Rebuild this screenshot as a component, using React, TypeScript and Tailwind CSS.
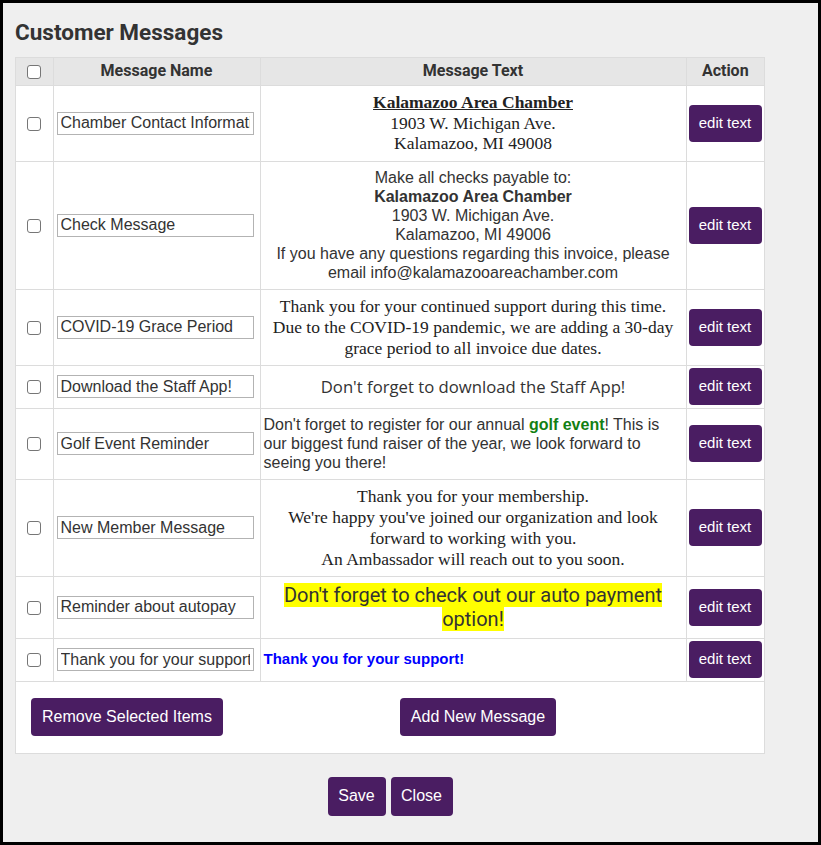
import React from 'react';

const purple = 'bg-[#4a1d62]';

type Row = { name: string; height: string; body: React.ReactNode };

const rows: Row[] = [
  {
    name: 'Chamber Contact Information',
    height: 'h-[76px]',
    body: (
      <div className="text-center font-['Liberation_Serif',serif] text-[17.5px] leading-[20.5px] text-[#222]">
        <div className="font-bold underline">Kalamazoo Area Chamber</div>
        <div>1903 W. Michigan Ave.</div>
        <div>Kalamazoo, MI 49008</div>
      </div>
    ),
  },
  {
    name: 'Check Message',
    height: 'h-[128px]',
    body: (
      <div className="text-center font-['Liberation_Sans',sans-serif] text-[16px] leading-[19px] text-[#333]">
        <div>Make all checks payable to:</div>
        <div className="font-bold">Kalamazoo Area Chamber</div>
        <div>1903 W. Michigan Ave.</div>
        <div>Kalamazoo, MI 49006</div>
        <div>
          If you have any questions regarding this invoice, please
          <br />
          email info@kalamazooareachamber.com
        </div>
      </div>
    ),
  },
  {
    name: 'COVID-19 Grace Period',
    height: 'h-[76px]',
    body: (
      <div className="text-center font-['Liberation_Serif',serif] text-[17.5px] leading-[21px] text-[#222]">
        Thank you for your continued support during this time.
        <br />
        Due to the COVID-19 pandemic, we are adding a 30-day
        <br />
        grace period to all invoice due dates.
      </div>
    ),
  },
  {
    name: 'Download the Staff App!',
    height: 'h-[43px]',
    body: (
      <div className="text-center font-['Open_Sans',sans-serif] text-[16.7px] leading-[24px] text-[#333]">
        Don't forget to download the Staff App!
      </div>
    ),
  },
  {
    name: 'Golf Event Reminder',
    height: 'h-[71px]',
    body: (
      <div className="text-left font-['Liberation_Sans',sans-serif] text-[16px] leading-[19px] text-[#333]">
        Don't forget to register for our annual <span className="font-bold text-[#137f13]">golf event</span>! This is our biggest fund raiser of the year, we look forward to seeing you there!
      </div>
    ),
  },
  {
    name: 'New Member Message',
    height: 'h-[97px]',
    body: (
      <div className="text-center font-['Liberation_Serif',serif] text-[17.5px] leading-[21px] text-[#222]">
        <div>Thank you for your membership.</div>
        <div>
          We're happy you've joined our organization and look
          <br />
          forward to working with you.
        </div>
        <div>An Ambassador will reach out to you soon.</div>
      </div>
    ),
  },
  {
    name: 'Reminder about autopay',
    height: 'h-[62px]',
    body: (
      <div className="text-center font-['Roboto',sans-serif] text-[20px] leading-[24px] text-[#333]">
        <span className="bg-[#ffff00]">Don't forget to check out our auto payment option!</span>
      </div>
    ),
  },
  {
    name: 'Thank you for your support',
    height: 'h-[43px]',
    body: (
      <div className="text-left font-['Liberation_Sans',sans-serif] text-[15px] font-bold text-[#0000ff]">
        Thank you for your support!
      </div>
    ),
  },
];

function PurpleButton({ children, className = '' }: { children: React.ReactNode; className?: string }) {
  return (
    <button
      className={`${purple} rounded-[4px] text-white font-['Liberation_Sans',sans-serif] ${className}`}
    >
      {children}
    </button>
  );
}

function Check({ className = '' }: { className?: string }) {
  return (
    <input
      type="checkbox"
      className={`appearance-none w-[14px] h-[14px] border border-[#767676] rounded-[3px] bg-white align-middle ${className}`}
    />
  );
}

export default function App() {
  return (
    <div className="w-[821px] h-[845px] bg-black p-[3px]">
      <div className="h-full bg-[#efefef] pl-[12px] pt-[15px] font-['Roboto',sans-serif]">
        <h1 className="text-[22.5px] font-bold text-[#333] leading-[28px]">Customer Messages</h1>
        <div className="mt-[11px] w-[750px] border border-[#dcdcdc] bg-white">
          <table className="w-full border-collapse table-fixed">
            <colgroup>
              <col className="w-[37px]" />
              <col className="w-[207px]" />
              <col className="w-[426px]" />
              <col className="w-[78px]" />
            </colgroup>
            <thead>
              <tr className="h-[27px] bg-[#e6e6e6] text-[16px] font-bold text-[#333]">
                <th className="border-r border-b border-[#dcdcdc] align-middle">
                  <Check />
                </th>
                <th className="border-r border-b border-[#dcdcdc]">Message Name</th>
                <th className="border-r border-b border-[#dcdcdc]">Message Text</th>
                <th className="border-b border-[#dcdcdc]">Action</th>
              </tr>
            </thead>
            <tbody>
              {rows.map((r) => (
                <tr key={r.name} className={r.height}>
                  <td className="border-r border-b border-[#dcdcdc] text-center align-middle">
                    <Check />
                  </td>
                  <td className="border-r border-b border-[#dcdcdc] px-[3px] align-middle">
                    <input
                      type="text"
                      defaultValue={r.name}
                      className="w-[197px] h-[23px] border border-[#b3b3b3] px-[3px] text-[16px] text-[#333] font-['Liberation_Sans',sans-serif] outline-none"
                    />
                  </td>
                  <td className="border-r border-b border-[#dcdcdc] px-[3px] align-middle">{r.body}</td>
                  <td className="border-b border-[#dcdcdc] px-[2px] align-middle">
                    <PurpleButton className="w-[73px] h-[37px] text-[15px]">edit text</PurpleButton>
                  </td>
                </tr>
              ))}
            </tbody>
          </table>
          <div className="flex h-[71px] items-center pl-[15px]">
            <PurpleButton className="h-[38px] w-[192px] text-[16px]">Remove Selected Items</PurpleButton>
            <PurpleButton className="ml-[177px] h-[38px] w-[156px] text-[16px]">Add New Message</PurpleButton>
          </div>
        </div>
        <div className="mt-[23px] flex w-[750px] justify-center gap-[5px]">
          <PurpleButton className="h-[39px] w-[58px] text-[16px]">Save</PurpleButton>
          <PurpleButton className="h-[39px] w-[62px] text-[16px]">Close</PurpleButton>
        </div>
      </div>
    </div>
  );
}
